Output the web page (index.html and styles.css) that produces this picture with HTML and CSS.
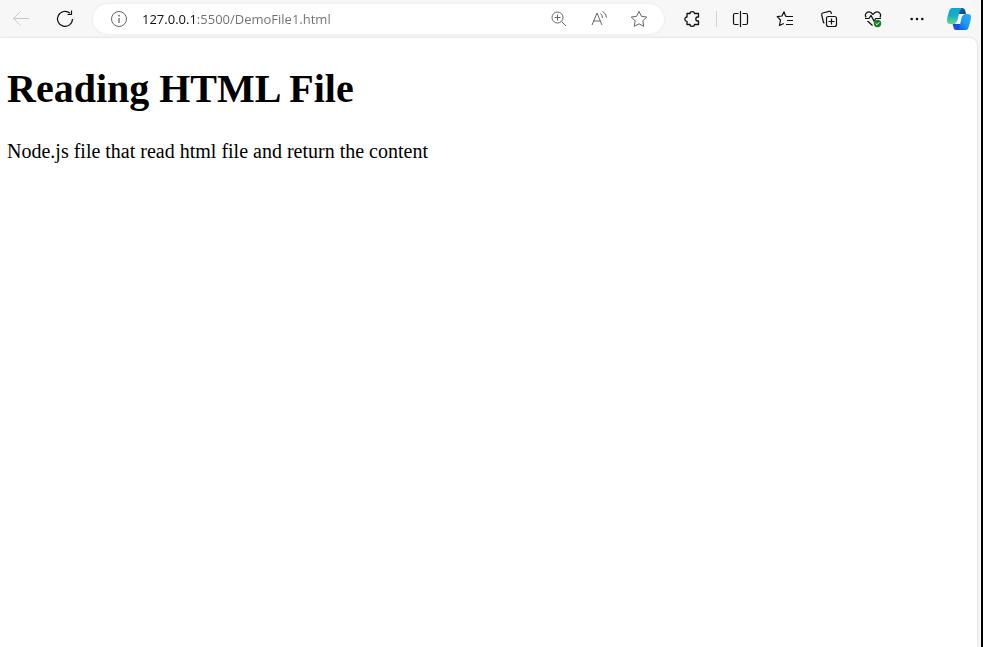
FILE: index.html
```html
<!DOCTYPE html>
<html lang="en">
<head>
<meta charset="utf-8">
<title>Reading HTML File</title>
<link rel="stylesheet" href="styles.css">
</head>
<body>
<div class="browser">
  <header class="toolbar">
    <nav class="group" aria-label="Navigation">
      <button class="tool" aria-label="Back" disabled>
        <svg width="20" height="20" viewBox="0 0 20 20"><path d="M18 9.500H2.500M9.500 2.500L2.500 9.500L9.500 16.500" stroke="#c9c9c9"/></svg>
      </button>
      <button class="tool" aria-label="Refresh">
        <svg width="20" height="20" viewBox="0 0 20 20"><path d="M15 4.300A7.500 7.500 0 1 0 17.500 10M16.500 1.500V5.500H12.500" stroke-width="1.200"/></svg>
      </button>
    </nav>
    <form class="address">
      <button class="field-tool" type="button" aria-label="Site information">
        <svg width="20" height="20" viewBox="0 0 20 20"><circle cx="10" cy="10" r="7.500"/><path d="M10 9V14" stroke-width="1.300"/><circle class="solid" cx="10" cy="6.700" r=".9"/></svg>
      </button>
      <input class="url" type="text" aria-label="Address" value="127.0.0.1:5500/DemoFile1.html">
      <button class="field-tool" type="button" aria-label="Zoom">
        <svg width="20" height="20" viewBox="0 0 20 20"><circle cx="8.500" cy="8.500" r="5.500"/><path d="M12.500 12.500L17 17M8.500 5.500V11.500M5.500 8.500H11.500"/></svg>
      </button>
      <button class="field-tool" type="button" aria-label="Read aloud">
        <svg width="20" height="20" viewBox="0 0 20 20"><path d="M3 16L8 4L13 16M4.700 12H11.300M11.500 4.500Q13.500 6 13.500 9M13.500 2.500Q17.500 4.500 17.500 8.500"/></svg>
      </button>
      <button class="field-tool" type="button" aria-label="Add to favorites">
        <svg width="20" height="20" viewBox="0 0 20 20"><path d="M10 2.300L12.400 7.300L17.700 8L13.800 11.900L14.800 17.300L10 14.800L5.200 17.300L6.200 11.900L2.300 8L7.600 7.300Z" stroke-linejoin="round"/></svg>
      </button>
    </form>
    <div class="group">
      <button class="tool" aria-label="Extensions">
        <svg width="20" height="20" viewBox="0 0 20 20"><path d="M5 4.500H8C8 2 12.500 2 12.500 4.500H16.500V8H15.500C13.300 8 13.300 12 15.500 12H16.500V15.500H12.500C12.500 18 8 18 8 15.500H5V12.300C2.200 12.300 2.200 8 5 8Z" stroke-width="1.300" stroke-linejoin="round"/></svg>
      </button>
      <span class="divider"></span>
      <button class="tool" aria-label="Split screen">
        <svg width="20" height="20" viewBox="0 0 20 20"><path d="M9.500 2V18M7.500 4.500H4Q2.500 4.500 2.500 6V14Q2.500 15.500 4 15.500H7.500M11.500 4.500H15Q16.500 4.500 16.500 6V14Q16.500 15.500 15 15.500H11.500" stroke-width="1.200"/></svg>
      </button>
      <button class="tool" aria-label="Favorites">
        <svg width="20" height="20" viewBox="0 0 20 20"><path d="M12 7.500L10.500 7L9 2.800L7 7L2.200 7.700L5.500 11L4.500 16.500L8.800 14.500M10.500 7.500H18M12 11.500H18M11 15.500H18" stroke-width="1.200" stroke-linejoin="round"/></svg>
      </button>
      <button class="tool" aria-label="Collections">
        <svg width="20" height="20" viewBox="0 0 20 20"><path d="M5.500 14L4.500 13.500L2.700 6Q2.300 4.500 3.700 4L10 2.300Q11.500 2 12 3.300L12.400 5M9 7.500H15.500Q17.500 7.500 17.500 9.500V15.500Q17.500 17.500 15.500 17.500H9.500Q7.500 17.500 7.500 15.500V9.500Q7.500 7.500 9.500 7.500M12.500 9.500V15.500M9.500 12.500H15.500" stroke-width="1.200"/></svg>
      </button>
      <button class="tool" aria-label="Browser essentials">
        <svg width="20" height="20" viewBox="0 0 20 20"><path d="M3 8.500C1 5 4.500 1.500 8 3.500L10 5.400L12 3.500C15.500 1.500 19 5 17 8.500M2 9.500H6L8 6.500L11 12L12.700 9.500H18M4.500 12L9.500 16.500" stroke-width="1.200"/><circle cx="14.500" cy="14.500" r="3.700" fill="#128024" stroke="none"/><path d="M12.700 14.500L14 15.700L16.300 13.300" stroke="#fff"/></svg>
      </button>
      <button class="tool" aria-label="Settings and more">
        <svg width="20" height="20" viewBox="0 0 20 20"><g class="solid"><circle cx="4.700" cy="10" r="1.300"/><circle cx="10" cy="10" r="1.300"/><circle cx="15.300" cy="10" r="1.300"/></g></svg>
      </button>
    </div>
    <button class="tool copilot" aria-label="Copilot">
      <svg width="26" height="26" viewBox="0 0 26 26">
        <defs>
          <linearGradient id="leaf" x1="0" y1="0" x2="0" y2="1"><stop offset="0" stop-color="#10a3d6"/><stop offset=".5" stop-color="#18b0bc"/><stop offset="1" stop-color="#62dc83"/></linearGradient>
          <linearGradient id="wave" x1="1" y1="0" x2="0" y2="1"><stop offset="0" stop-color="#31a9f4"/><stop offset=".5" stop-color="#189bee"/><stop offset="1" stop-color="#1747df"/></linearGradient>
          <linearGradient id="fold" x1="0" y1="0" x2="1" y2="1"><stop offset="0" stop-color="#086c9a"/><stop offset="1" stop-color="#123f85"/></linearGradient>
        </defs>
        <g stroke="none">
          <path d="M12 2H16.500Q18.500 2 19.200 4.500L20 8H12Z" fill="url(#fold)"/>
          <path d="M6.500 17.500H14.500L14 24H10Q8 24 7.500 21.500Z" fill="#1555dc"/>
          <path d="M13.500 8H18L14 18H9Z" fill="#fff"/>
          <path d="M6 2H16Q14 3 13.200 7L11.500 14Q10.500 18 5 18H4Q1 18 1 14.500Q1 12 3 5.500Q4 2 6 2Z" fill="url(#leaf)"/>
          <path d="M20 24H10.500Q13 23 14 19L15.500 12Q16.500 8 20 8H22Q25 8 25 11Q25 13.500 23 20Q22 24 20 24Z" fill="url(#wave)"/>
        </g>
      </svg>
    </button>
  </header>
  <main class="page">
    <h1>Reading HTML File</h1>
    <p>Node.js file that read html file and return the content</p>
  </main>
</div>
</body>
</html>
```
FILE: styles.css
```css
* {
  box-sizing: border-box;
}

body {
  margin: 0;
}

.browser {
  display: flex;
  flex-direction: column;
  min-height: 100vh;
  padding-right: 4px;
  border-right: 2px solid #000;
  background: #f7f7f7;
}

.toolbar {
  display: flex;
  align-items: center;
  height: 38px;
  padding-left: 1px;
}

.group {
  display: flex;
  align-items: center;
  gap: 4px;
}

button {
  display: flex;
  align-items: center;
  justify-content: center;
  flex: none;
  height: 32px;
  padding: 0;
  border: 0;
  background: none;
  color: #111;
}

.tool {
  width: 40px;
}

svg {
  fill: none;
  stroke: currentColor;
}

.solid {
  fill: currentColor;
  stroke: none;
}

.address {
  display: flex;
  align-items: center;
  flex: 1;
  min-width: 0;
  height: 30px;
  margin: 0 8px;
  padding: 0 5px 0 6px;
  border-radius: 15px;
  background: #fff;
  box-shadow: 0 0 3px #e4e4e4;
}

.field-tool {
  width: 40px;
  color: #666;
}

.url {
  flex: 1;
  min-width: 0;
  padding: 0 0 0 3px;
  border: 0;
  outline: 0;
  font: 13px/20px "Open Sans", sans-serif;
  color: transparent;
  background: linear-gradient(to right, #111 57px, #707070 57px);
  background-clip: text;
  -webkit-background-clip: text;
}

.divider {
  width: 1px;
  height: 16px;
  background: #d0d0d0;
}

.copilot {
  margin: 0 -2px 0 2px;
}

.page {
  flex: 1;
  padding: 1px 7px;
  border-radius: 0 8px 0 0;
  background: #fff;
  box-shadow: 0 0 3px #cfcfcf;
  font-family: "Liberation Serif", serif;
  color: #000;
}

h1 {
  margin: 27px 0;
  font-size: 40px;
  line-height: 46px;
}

p {
  margin: 0;
  font-size: 20px;
  line-height: 24px;
}
```
